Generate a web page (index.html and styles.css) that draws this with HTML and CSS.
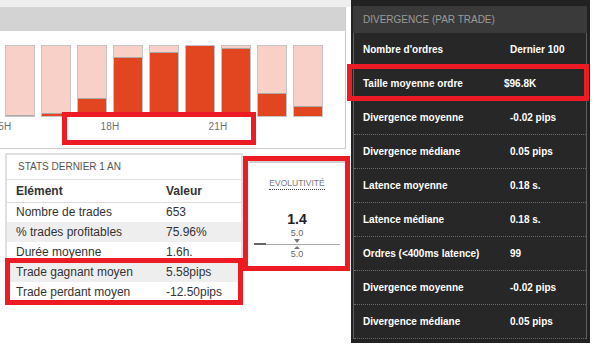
FILE: index.html
```html
<!DOCTYPE html>
<html lang="fr">
<head>
<meta charset="utf-8">
<title>Stats</title>
<link rel="stylesheet" href="styles.css">
</head>
<body>
<div class="page">
  <div class="left">
    <div class="topstrip"></div>
    <section class="chart">
      <div class="chart-head"></div>
      <div class="chart-body">
        <div class="bars">
          <div class="bar"><div class="fill" style="height:0px"></div></div>
          <div class="bar"><div class="fill" style="height:3px"></div></div>
          <div class="bar"><div class="fill" style="height:18px"></div></div>
          <div class="bar"><div class="fill" style="height:59px"></div></div>
          <div class="bar"><div class="fill" style="height:64px"></div></div>
          <div class="bar full"><div class="fill" style="height:70px"></div></div>
          <div class="bar"><div class="fill" style="height:68px"></div></div>
          <div class="bar"><div class="fill" style="height:23px"></div></div>
          <div class="bar"><div class="fill" style="height:10px"></div></div>
        </div>
        <div class="hours"><span>15H</span><span>18H</span><span>21H</span></div>
      </div>
    </section>
    <div class="lower">
      <section class="stats">
        <div class="stats-title">STATS DERNIER 1 AN</div>
        <table class="stats-table">
          <thead>
            <tr><th>Elément</th><th>Valeur</th></tr>
          </thead>
          <tbody>
            <tr><td>Nombre de trades</td><td>653</td></tr>
            <tr class="alt"><td>% trades profitables</td><td>75.96%</td></tr>
            <tr><td>Durée moyenne</td><td>1.6h.</td></tr>
            <tr class="alt"><td>Trade gagnant moyen</td><td>5.58pips</td></tr>
            <tr><td>Trade perdant moyen</td><td>-12.50pips</td></tr>
          </tbody>
        </table>
      </section>
      <section class="evo">
        <div class="evo-title">EVOLUTIVITÉ</div>
        <div class="evo-value">1.4</div>
        <div class="evo-sub">5.0</div>
        <div class="tri-down"></div>
        <div class="scale"><div class="scale-fill"></div></div>
        <div class="tri-up"></div>
        <div class="evo-sub">5.0</div>
      </section>
    </div>
  </div>
  <aside class="dp">
    <div class="dp-head">DIVERGENCE (PAR TRADE)</div>
    <div class="dp-table">
      <div class="dp-row"><span>Nombre d'ordres</span><span>Dernier 100</span></div>
      <div class="dp-row"><span>Taille moyenne ordre</span><span class="shift">$96.8K</span></div>
      <div class="dp-row"><span>Divergence moyenne</span><span>-0.02 pips</span></div>
      <div class="dp-row"><span>Divergence médiane</span><span>0.05 pips</span></div>
      <div class="dp-row"><span>Latence moyenne</span><span>0.18 s.</span></div>
      <div class="dp-row"><span>Latence médiane</span><span>0.18 s.</span></div>
      <div class="dp-row"><span>Ordres (&lt;400ms latence)</span><span>99</span></div>
      <div class="dp-row"><span>Divergence moyenne</span><span>-0.02 pips</span></div>
      <div class="dp-row"><span>Divergence médiane</span><span>0.05 pips</span></div>
    </div>
  </aside>
  <div class="hl hl-chart"></div>
  <div class="hl hl-stats"></div>
  <div class="hl hl-evo"></div>
  <div class="hl hl-dark"></div>
</div>
</body>
</html>
```
FILE: styles.css
```css
* { box-sizing: border-box; }

body {
  margin: 0;
  background: #ffffff;
  font-family: "Liberation Sans", Arial, sans-serif;
  color: #333333;
}

.page {
  position: relative;
  width: 595px;
  height: 346px;
  overflow: hidden;
  display: flex;
  align-items: flex-start;
}

.left {
  width: 351px;
  flex: none;
}

.topstrip {
  height: 7px;
  background: #eeeeee;
}

.chart {
  width: 346px;
  border-right: 1px solid #cccccc;
  border-bottom: 1px solid #cccccc;
  overflow: hidden;
}

.chart-head {
  height: 24px;
  background: #d3d3d3;
}

.chart-body {
  height: 117px;
  padding-top: 14px;
  padding-left: 5px;
  background: #ffffff;
}

.bars {
  display: flex;
  gap: 6px;
  height: 72px;
}

.bar {
  width: 30px;
  height: 72px;
  background: #f8d0c7;
  border: 1px solid #c4c4c4;
  display: flex;
  flex-direction: column;
  justify-content: flex-end;
}

.fill {
  background: #e24621;
  border-top: 1px solid #aaaaaa;
}

.bar.full .fill {
  border-top: none;
}

.hours {
  display: flex;
  margin-left: -57px;
}

.hours span {
  width: 108px;
  flex: none;
  text-align: center;
  font-size: 10px;
  line-height: 20px;
  color: #707070;
  letter-spacing: 0.3px;
}

.lower {
  display: flex;
  align-items: flex-start;
  margin-top: 4px;
}

.stats {
  margin-left: 5px;
  width: 238px;
  border: 2px solid #e0e0e0;
  background: #ffffff;
}

.stats-title {
  height: 25px;
  line-height: 24px;
  padding-left: 11px;
  font-size: 10px;
  color: #555555;
  border-bottom: 1px solid #dddddd;
}

.stats-table {
  width: 100%;
  border-collapse: collapse;
  font-size: 12px;
  color: #333333;
}

.stats-table th {
  text-align: left;
  font-weight: bold;
  height: 22px;
  padding: 0 0 0 9px;
  border-bottom: 1px solid #dddddd;
}

.stats-table th:first-child,
.stats-table td:first-child {
  width: 159px;
}

.stats-table td {
  height: 20px;
  padding: 0 0 0 9px;
}

.stats-table th + th,
.stats-table td + td {
  padding-left: 0;
}

.stats-table tr.alt td {
  background: #eeeeee;
}

.evo {
  margin-left: 6px;
  margin-top: 8px;
  width: 96px;
  height: 104px;
  border-top: 2px solid #d0d0d0;
  background: #ffffff;
  display: flex;
  flex-direction: column;
  align-items: center;
}

.evo-title {
  margin-top: 15px;
  font-size: 8.5px;
  line-height: 10px;
  color: #777777;
  border-bottom: 1px dotted #444444;
  padding-bottom: 1px;
}

.evo-value {
  margin-top: 21px;
  font-size: 14px;
  font-weight: bold;
  line-height: 16px;
  color: #222222;
}

.evo-sub {
  margin-top: 1px;
  font-size: 9px;
  line-height: 10px;
  color: #666666;
}

.tri-down {
  margin-top: 1px;
  width: 0;
  height: 0;
  border-left: 3px solid transparent;
  border-right: 3px solid transparent;
  border-top: 4px solid #777777;
}

.scale {
  margin-top: 1px;
  width: 86px;
  height: 1px;
  background: #aaaaaa;
  position: relative;
}

.scale-fill {
  width: 12px;
  height: 2px;
  background: #666666;
  margin-top: -1px;
}

.tri-up {
  margin-top: 1px;
  width: 0;
  height: 0;
  border-left: 3px solid transparent;
  border-right: 3px solid transparent;
  border-bottom: 3px solid #777777;
}

.tri-up + .evo-sub {
  margin-top: 0;
}

.dp {
  flex: none;
  width: 239px;
  height: 343px;
  background: #222222;
  padding: 6px 3px 4px 2px;
}

.dp-head {
  height: 27px;
  line-height: 27px;
  padding-left: 10px;
  background: #3a3a3a;
  color: #9a9a9a;
  font-size: 10px;
}

.dp-table {
  background: #272727;
  border-left: 1px solid #5e5e5e;
  border-right: 1px solid #5e5e5e;
}

.dp-row {
  display: grid;
  grid-template-columns: 147px 1fr;
  align-items: center;
  height: 34px;
  padding-left: 9px;
  border-bottom: 1px dotted #6a6a6a;
  color: #ffffff;
  font-weight: bold;
  font-size: 10px;
}

.dp-row .shift {
  margin-left: -6px;
}

.hl {
  position: absolute;
  border: 5px solid #ed1c24;
}

.hl-chart {
  left: 62px;
  top: 112px;
  width: 194px;
  height: 33px;
}

.hl-stats {
  left: 5px;
  top: 258px;
  width: 238px;
  height: 47px;
}

.hl-evo {
  left: 243px;
  top: 156px;
  width: 107px;
  height: 115px;
}

.hl-dark {
  left: 347px;
  top: 64px;
  width: 242px;
  height: 37px;
}
```
